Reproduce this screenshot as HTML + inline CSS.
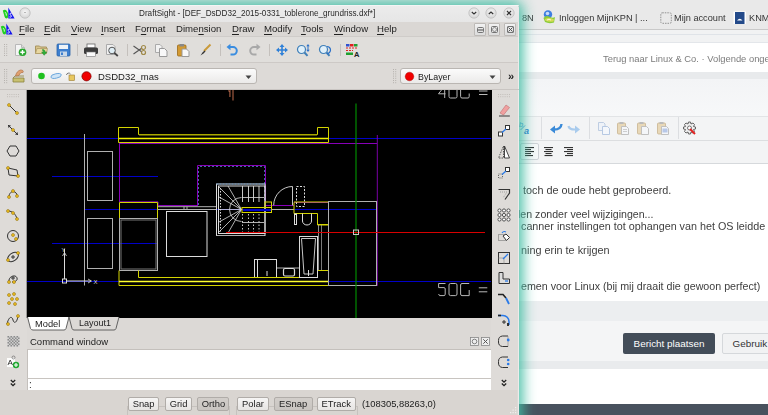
<!DOCTYPE html>
<html><head><meta charset="utf-8">
<style>
*{margin:0;padding:0;box-sizing:border-box}
html,body{width:768px;height:415px;overflow:hidden;background:#fff;font-family:"Liberation Sans",sans-serif;position:relative}
.a{position:absolute}
.t{position:absolute;white-space:nowrap;will-change:transform}
</style></head><body>

<!-- ===== Browser background ===== -->
<div class="a" style="left:0;top:0;width:768px;height:29px;background:#e9e9e9"></div>
<div class="a" style="left:0;top:29px;width:768px;height:1px;background:#c9c9c9"></div>
<div class="a" style="left:0;top:30px;width:768px;height:13px;background:#f1f2f3"></div>
<div class="a" style="left:0;top:34px;width:768px;height:1px;background:#dfe3e8"></div>
<div class="a" style="left:0;top:42px;width:768px;height:1px;background:#e3e6ea"></div>
<div class="a" style="left:0;top:43px;width:768px;height:29px;background:#fff"></div>
<div class="a" style="left:0;top:72px;width:768px;height:7px;background:#e8eaec"></div>
<div class="a" style="left:0;top:79px;width:768px;height:37px;background:linear-gradient(#f3f4f6,#f7f8f9)"></div>
<div class="a" style="left:0;top:116px;width:768px;height:48px;background:#f3f4f5;border-top:1px solid #e2e4e6;border-bottom:1px solid #d6d9dc"></div>
<div class="a" style="left:0;top:140px;width:768px;height:1px;background:#dcdee0"></div>
<div class="a" style="left:0;top:164px;width:768px;height:137px;background:#fff"></div>
<div class="a" style="left:0;top:301px;width:768px;height:20px;background:#eceef0"></div>
<div class="a" style="left:0;top:321px;width:768px;height:40px;background:#f4f5f6"></div>
<div class="a" style="left:0;top:361px;width:768px;height:8px;background:#e9ebed"></div>
<div class="a" style="left:0;top:369px;width:768px;height:35px;background:#fff"></div>
<div class="a" style="left:0;top:404px;width:768px;height:11px;background:#48525e"></div>

<!-- bookmarks text -->
<div class="t" style="left:521.5px;top:14px;font-size:9.2px;line-height:9.2px;color:#333">8N</div>
<div class="t" style="left:559px;top:14px;font-size:9.2px;line-height:9.2px;color:#333">Inloggen MijnKPN | ...</div>
<div class="t" style="left:674px;top:14px;font-size:9.2px;line-height:9.2px;color:#333">Mijn account</div>
<div class="t" style="left:749px;top:14px;font-size:9.2px;line-height:9.2px;color:#333">KNMI</div>
<div class="t" style="left:603px;top:53.9px;font-size:9.4px;line-height:9.4px;color:#7c7c7c">Terug naar Linux &amp; Co. · Volgende ongelezen</div>

<!-- content text -->
<div class="t" style="left:523px;top:184.6px;font-size:10.85px;line-height:10.85px;color:#404040">toch de oude hebt geprobeerd.</div>
<div class="t" style="left:518px;top:208.8px;font-size:10.6px;line-height:10.6px;color:#404040">len zonder veel wijzigingen...</div>
<div class="t" style="left:520.8px;top:220.5px;font-size:10.78px;line-height:10.78px;color:#404040">canner instellingen tot ophangen van het OS leidde</div>
<div class="t" style="left:520.8px;top:244.6px;font-size:10.85px;line-height:10.85px;color:#404040">ning erin te krijgen</div>
<div class="t" style="left:521.3px;top:280.8px;font-size:10.7px;line-height:10.7px;color:#404040">emen voor Linux (bij mij draait die gewoon perfect)</div>

<!-- buttons -->
<div class="a" style="left:623px;top:333px;width:92px;height:21px;background:#434d59;border-radius:2px;color:#fff;font-size:9.9px;line-height:21px;text-align:center">Bericht plaatsen</div>
<div class="a" style="left:721.5px;top:333px;width:60px;height:21px;background:#f1f2f3;border:1px solid #d5d8db;border-radius:2px;color:#333;font-size:9.9px;line-height:19px;padding-left:10px">Gebruik</div>


<svg class="a" style="left:542px;top:9px;" width="14" height="16" viewBox="0 0 14 16"><circle cx="6" cy="5.5" r="4.2" fill="#3f7fe0"/><circle cx="5.5" cy="4.5" r="1.8" fill="#c8dcf8"/><path d="M1.5 9 Q4 5.5 8 8 Q11 9.5 13 8 L12 13.5 Q7 15 3 13Z" fill="#8ccc3a"/><path d="M3 10 Q7 8 12 10.5 L11.5 12.5 Q7 13 3.5 11.8Z" fill="#e8e060" opacity="0.8"/><path d="M5 11 Q7 9.5 9 11" stroke="#fff" stroke-width="0.8" fill="none"/></svg>
<svg class="a" style="left:660px;top:12px;" width="13" height="12" viewBox="0 0 13 12"><rect x="0.8" y="0.8" width="10.5" height="10.5" rx="1.5" fill="none" stroke="#888" stroke-width="0.9" stroke-dasharray="1.5 1"/></svg>
<svg class="a" style="left:733px;top:11px;" width="14" height="14" viewBox="0 0 14 14"><rect x="0.5" y="0.5" width="12.5" height="12.5" fill="#fff"/><rect x="2" y="1" width="9.5" height="12" fill="#234a8a"/><path d="M4 9.5 Q6.7 6 9.5 9.5Z" fill="#fff"/></svg>
<div class="a" style="left:540.5px;top:117px;width:1px;height:22px;background:#dcdee1"></div>
<div class="a" style="left:589.3px;top:117px;width:1px;height:22px;background:#dcdee1"></div>
<div class="a" style="left:677.6px;top:117px;width:1px;height:22px;background:#dcdee1"></div>
<svg class="a" style="left:518px;top:120px;" width="16" height="16" viewBox="0 0 16 16"><text x="1" y="7" font-family="Liberation Sans" font-size="7.5" font-style="italic" fill="#3a8ad8">b</text><text x="6" y="14" font-family="Liberation Sans" font-size="9" font-weight="bold" font-style="italic" fill="#2f7fd0">a</text><path d="M2.5 10 L7 5.5" stroke="#3a8ad8" stroke-width="0.9"/></svg>
<svg class="a" style="left:549px;top:122px;" width="14" height="12" viewBox="0 0 14 12"><path d="M12.5 2 Q12 7.5 5 7.5" stroke="#3a8ad8" stroke-width="2.4" fill="none"/><path d="M1 7.5 L6 3.5 V11.5Z" fill="#3a8ad8"/></svg>
<svg class="a" style="left:567px;top:122px;" width="14" height="12" viewBox="0 0 14 12"><path d="M1.5 4 Q2 7.5 8 7.5" stroke="#a9cbed" stroke-width="2.2" fill="none"/><path d="M13 7.5 L8 3.5 V11.5Z" fill="#a9cbed"/></svg>
<svg class="a" style="left:597px;top:121px;" width="15" height="15" viewBox="0 0 15 15"><path d="M1.5 1.5 H6.5 L8 3 V9.5 H1.5Z" fill="#eef2f8" stroke="#b8c8e0" stroke-width="0.9"/><path d="M5.5 5.5 H10.5 L12.5 7.5 V13.5 H5.5Z" fill="#f4f7fb" stroke="#b0c4e0" stroke-width="0.9"/></svg>
<svg class="a" style="left:616px;top:121px;" width="15" height="15" viewBox="0 0 15 15"><rect x="1.5" y="2" width="8" height="11" rx="1" fill="#e8d8b8" stroke="#c8b490" stroke-width="0.8"/><rect x="3.5" y="1" width="4" height="2" fill="#bbb"/><path d="M5.5 5.5 H10.5 L12.5 7.5 V13.5 H5.5Z" fill="#f4f6f9" stroke="#bbb" stroke-width="0.9"/><path d="M7 8.5 H11 M7 10.5 H11" stroke="#bbb" stroke-width="0.7"/></svg>
<svg class="a" style="left:636px;top:121px;" width="15" height="15" viewBox="0 0 15 15"><rect x="1.5" y="2" width="8" height="11" rx="1" fill="#e8d8b8" stroke="#c8b490" stroke-width="0.8"/><rect x="3.5" y="1" width="4" height="2" fill="#bbb"/><path d="M5.5 5.5 H10.5 L12.5 7.5 V13.5 H5.5Z" fill="#f4f6f9" stroke="#bbb" stroke-width="0.9"/></svg>
<svg class="a" style="left:656px;top:121px;" width="15" height="15" viewBox="0 0 15 15"><rect x="1.5" y="2" width="8" height="11" rx="1" fill="#e8d8b8" stroke="#c8b490" stroke-width="0.8"/><rect x="3.5" y="1" width="4" height="2" fill="#bbb"/><path d="M5.5 5.5 H10.5 L12.5 7.5 V13.5 H5.5Z" fill="#f4f6f9" stroke="#bbb" stroke-width="0.9"/><rect x="6.5" y="7.5" width="5" height="4" fill="#b8c8e8"/></svg>
<svg class="a" style="left:682px;top:121px;" width="15" height="15" viewBox="0 0 15 15"><path d="M6.5 1 L8.5 1 L9 3 L11 2 L12.5 3.5 L11.5 5.5 L13.5 6 V8 L11.5 8.5 L12.5 10.5 L11 12 L9 11 L8.5 13 H6.5 L6 11 L4 12 L2.5 10.5 L3.5 8.5 L1.5 8 V6 L3.5 5.5 L2.5 3.5 L4 2 L6 3Z" fill="#eee" stroke="#555" stroke-width="0.9"/><circle cx="7.5" cy="7" r="2" fill="#fff" stroke="#555" stroke-width="0.8"/><path d="M8 8 L13 13" stroke="#e02020" stroke-width="2"/></svg>
<div class="a" style="left:520px;top:143.4px;width:18.5px;height:16.6px;background:#f7f8f9;border:1px solid #cfd2d6;border-radius:2px"></div>
<svg class="a" style="left:524.5px;top:147px;" width="10" height="10" viewBox="0 0 10 10"><rect x="0" y="0" width="9" height="1.1" fill="#333"/><rect x="0" y="2" width="6" height="1.1" fill="#333"/><rect x="0" y="4" width="9" height="1.1" fill="#333"/><rect x="0" y="6" width="6" height="1.1" fill="#333"/><rect x="0" y="8" width="8" height="1.1" fill="#333"/></svg>
<svg class="a" style="left:544px;top:147px;" width="10" height="10" viewBox="0 0 10 10"><rect x="0.0" y="0" width="9" height="1.1" fill="#333"/><rect x="1.5" y="2" width="6" height="1.1" fill="#333"/><rect x="0.0" y="4" width="9" height="1.1" fill="#333"/><rect x="1.5" y="6" width="6" height="1.1" fill="#333"/><rect x="0.5" y="8" width="8" height="1.1" fill="#333"/></svg>
<svg class="a" style="left:564px;top:147px;" width="10" height="10" viewBox="0 0 10 10"><rect x="0" y="0" width="9" height="1.1" fill="#333"/><rect x="3" y="2" width="6" height="1.1" fill="#333"/><rect x="0" y="4" width="9" height="1.1" fill="#333"/><rect x="3" y="6" width="6" height="1.1" fill="#333"/><rect x="1" y="8" width="8" height="1.1" fill="#333"/></svg>
<div class="a" style="left:-30px;top:5px;width:549px;height:440px;border-top-right-radius:4px;background:#dcd9d6;box-shadow:0 0 13px 4px rgba(66,190,164,0.95)"></div>
<div class="a" style="left:0px;top:5px;width:519px;height:17px;background:linear-gradient(#ececec,#e6e6e6);border-top-right-radius:4px"></div>
<div class="a" style="left:0px;top:5px;width:519px;height:1px;background:#f4f4f4;border-top-right-radius:4px"></div>
<svg class="a" style="left:0px;top:7px;" width="16" height="13" viewBox="0 0 16 13"><path d="M2.8 3.6 Q5 2.2 6.5 3.4 Q8.5 5.5 8.3 9 Q8 11.5 6.5 11.5 Q5 11.5 4.5 9.5 Z" fill="#22d022"/><path d="M5.2 5.2 Q6.5 6.5 6.4 8.6" stroke="#e8ffe8" stroke-width="0.9" fill="none"/><path d="M8.3 0.6 L14.6 11.6 H8.3 Z" fill="#1414ee"/><path d="M11.5 6.3 Q10 5.8 9.8 7 Q9.8 7.8 10.8 8.2 Q11.8 8.7 11.2 9.8 Q10.5 10.4 9.4 9.9" stroke="#fff" stroke-width="0.9" fill="none"/></svg>
<svg class="a" style="left:19px;top:7px;" width="12" height="12" viewBox="0 0 12 12"><defs><radialGradient id="rg" cx="50%" cy="40%" r="60%"><stop offset="0" stop-color="#f6f6f6"/><stop offset="1" stop-color="#d4d4d4"/></radialGradient></defs><circle cx="6" cy="6" r="5.2" fill="url(#rg)" stroke="#bdbdbd" stroke-width="0.8"/><circle cx="6" cy="5.5" r="0.5" fill="#555"/></svg>
<div class="t" style="left:139.3px;top:9.5px;font-size:8.17px;line-height:8.17px;color:#2a2a2a;">DraftSight - [DEF_DsDD32_2015-0331_toblerone_grundriss.dxf*]</div>
<svg class="a" style="left:468px;top:7px;" width="12" height="12" viewBox="0 0 12 12"><circle cx="6" cy="6" r="5.2" fill="url(#rg)" stroke="#c0c0c0" stroke-width="0.8"/><path d="M3.8 5 L6 7 L8.2 5" stroke="#333" stroke-width="1.2" fill="none"/></svg>
<svg class="a" style="left:485px;top:7px;" width="12" height="12" viewBox="0 0 12 12"><circle cx="6" cy="6" r="5.2" fill="url(#rg)" stroke="#c0c0c0" stroke-width="0.8"/><path d="M3.8 7 L6 5 L8.2 7" stroke="#333" stroke-width="1.2" fill="none"/></svg>
<svg class="a" style="left:502.6px;top:7px;" width="12" height="12" viewBox="0 0 12 12"><circle cx="6" cy="6" r="5.2" fill="url(#rg)" stroke="#c0c0c0" stroke-width="0.8"/><path d="M4 4 L8 8 M8 4 L4 8" stroke="#333" stroke-width="1.2" fill="none"/></svg>
<div class="a" style="left:0px;top:22px;width:519px;height:14px;background:#dad7d4"></div>
<div class="a" style="left:0px;top:36px;width:519px;height:1px;background:#cfccc9"></div>
<svg class="a" style="left:-2.5px;top:22.5px;" width="16" height="13" viewBox="0 0 16 13"><path d="M2.8 3.6 Q5 2.2 6.5 3.4 Q8.5 5.5 8.3 9 Q8 11.5 6.5 11.5 Q5 11.5 4.5 9.5 Z" fill="#22d022"/><path d="M5.2 5.2 Q6.5 6.5 6.4 8.6" stroke="#e8ffe8" stroke-width="0.9" fill="none"/><path d="M8.3 0.6 L14.6 11.6 H8.3 Z" fill="#1414ee"/><path d="M11.5 6.3 Q10 5.8 9.8 7 Q9.8 7.8 10.8 8.2 Q11.8 8.7 11.2 9.8 Q10.5 10.4 9.4 9.9" stroke="#fff" stroke-width="0.9" fill="none"/></svg>
<div class="t" style="left:19px;top:24.4px;font-size:9.6px;line-height:9.6px;color:#222;"><span style="text-decoration:underline;text-underline-offset:1.5px">F</span>ile</div>
<div class="t" style="left:44.3px;top:24.4px;font-size:9.6px;line-height:9.6px;color:#222;"><span style="text-decoration:underline;text-underline-offset:1.5px">E</span>dit</div>
<div class="t" style="left:70.8px;top:24.4px;font-size:9.6px;line-height:9.6px;color:#222;"><span style="text-decoration:underline;text-underline-offset:1.5px">V</span>iew</div>
<div class="t" style="left:101px;top:24.4px;font-size:9.6px;line-height:9.6px;color:#222;"><span style="text-decoration:underline;text-underline-offset:1.5px">I</span>nsert</div>
<div class="t" style="left:135.4px;top:24.4px;font-size:9.6px;line-height:9.6px;color:#222;">F<span style="text-decoration:underline;text-underline-offset:1.5px">o</span>rmat</div>
<div class="t" style="left:175.9px;top:24.4px;font-size:9.6px;line-height:9.6px;color:#222;">Dime<span style="text-decoration:underline;text-underline-offset:1.5px">n</span>sion</div>
<div class="t" style="left:231.8px;top:24.4px;font-size:9.6px;line-height:9.6px;color:#222;"><span style="text-decoration:underline;text-underline-offset:1.5px">D</span>raw</div>
<div class="t" style="left:264.4px;top:24.4px;font-size:9.6px;line-height:9.6px;color:#222;"><span style="text-decoration:underline;text-underline-offset:1.5px">M</span>odify</div>
<div class="t" style="left:300.9px;top:24.4px;font-size:9.6px;line-height:9.6px;color:#222;"><span style="text-decoration:underline;text-underline-offset:1.5px">T</span>ools</div>
<div class="t" style="left:333.7px;top:24.4px;font-size:9.6px;line-height:9.6px;color:#222;"><span style="text-decoration:underline;text-underline-offset:1.5px">W</span>indow</div>
<div class="t" style="left:377.4px;top:24.4px;font-size:9.6px;line-height:9.6px;color:#222;"><span style="text-decoration:underline;text-underline-offset:1.5px">H</span>elp</div>
<div class="a" style="left:474px;top:23.4px;width:12.3px;height:12.3px;background:linear-gradient(#f2f2f2,#dcdcdc);border:1px solid #bdbab7;border-radius:1px"></div>
<div class="a" style="left:488px;top:23.4px;width:12.3px;height:12.3px;background:linear-gradient(#f2f2f2,#dcdcdc);border:1px solid #bdbab7;border-radius:1px"></div>
<div class="a" style="left:503.9px;top:23.4px;width:12.3px;height:12.3px;background:linear-gradient(#f2f2f2,#dcdcdc);border:1px solid #bdbab7;border-radius:1px"></div>
<svg class="a" style="left:474px;top:23px;" width="13" height="13" viewBox="0 0 13 13"><rect x="3.5" y="4.5" width="6" height="5" rx="1" fill="none" stroke="#666" stroke-width="0.9"/><path d="M4 7 H9" stroke="#666" stroke-width="1.2"/></svg>
<svg class="a" style="left:488px;top:23px;" width="13" height="13" viewBox="0 0 13 13"><rect x="3.5" y="3.5" width="6" height="6" rx="1" fill="none" stroke="#666" stroke-width="0.9"/><circle cx="6.5" cy="6.5" r="2" fill="none" stroke="#777" stroke-width="0.7"/></svg>
<svg class="a" style="left:503.9px;top:23px;" width="13" height="13" viewBox="0 0 13 13"><rect x="3.5" y="3.5" width="6" height="6" rx="0.5" fill="none" stroke="#666" stroke-width="0.9"/><path d="M4.5 4.5 L8.5 8.5 M8.5 4.5 L4.5 8.5" stroke="#555" stroke-width="1"/></svg>
<div class="a" style="left:0px;top:37px;width:519px;height:25px;background:#e0dedb"></div>
<div class="a" style="left:0px;top:62px;width:519px;height:1px;background:#cdc9c6"></div>
<div class="a" style="left:0px;top:63px;width:519px;height:27px;background:#dddad7"></div>
<svg class="a" style="left:3.5px;top:44px;" width="5.4" height="14.200000000000001" viewBox="0 0 5.4 14.200000000000001"><rect x="0.0" y="0.0" width="1" height="1" fill="#b5b1ad"/><rect x="0.0" y="2.2" width="1" height="1" fill="#b5b1ad"/><rect x="0.0" y="4.4" width="1" height="1" fill="#b5b1ad"/><rect x="0.0" y="6.6000000000000005" width="1" height="1" fill="#b5b1ad"/><rect x="0.0" y="8.8" width="1" height="1" fill="#b5b1ad"/><rect x="0.0" y="11.0" width="1" height="1" fill="#b5b1ad"/><rect x="2.2" y="0.0" width="1" height="1" fill="#b5b1ad"/><rect x="2.2" y="2.2" width="1" height="1" fill="#b5b1ad"/><rect x="2.2" y="4.4" width="1" height="1" fill="#b5b1ad"/><rect x="2.2" y="6.6000000000000005" width="1" height="1" fill="#b5b1ad"/><rect x="2.2" y="8.8" width="1" height="1" fill="#b5b1ad"/><rect x="2.2" y="11.0" width="1" height="1" fill="#b5b1ad"/></svg>
<svg class="a" style="left:3.5px;top:69px;" width="5.4" height="16.400000000000002" viewBox="0 0 5.4 16.400000000000002"><rect x="0.0" y="0.0" width="1" height="1" fill="#b5b1ad"/><rect x="0.0" y="2.2" width="1" height="1" fill="#b5b1ad"/><rect x="0.0" y="4.4" width="1" height="1" fill="#b5b1ad"/><rect x="0.0" y="6.6000000000000005" width="1" height="1" fill="#b5b1ad"/><rect x="0.0" y="8.8" width="1" height="1" fill="#b5b1ad"/><rect x="0.0" y="11.0" width="1" height="1" fill="#b5b1ad"/><rect x="0.0" y="13.200000000000001" width="1" height="1" fill="#b5b1ad"/><rect x="2.2" y="0.0" width="1" height="1" fill="#b5b1ad"/><rect x="2.2" y="2.2" width="1" height="1" fill="#b5b1ad"/><rect x="2.2" y="4.4" width="1" height="1" fill="#b5b1ad"/><rect x="2.2" y="6.6000000000000005" width="1" height="1" fill="#b5b1ad"/><rect x="2.2" y="8.8" width="1" height="1" fill="#b5b1ad"/><rect x="2.2" y="11.0" width="1" height="1" fill="#b5b1ad"/><rect x="2.2" y="13.200000000000001" width="1" height="1" fill="#b5b1ad"/></svg>
<svg class="a" style="left:13px;top:43px;" width="15" height="15" viewBox="0 0 15 15"><path d="M2.5 1.5 H8.5 L11.5 4.5 V12.5 H2.5 Z" fill="#f4f4f4" stroke="#b8b8b8" stroke-width="1"/><path d="M8.5 1.5 V4.5 H11.5" fill="#ddd" stroke="#b8b8b8"/><circle cx="9.5" cy="9.2" r="3.8" fill="#29a82f"/><path d="M9.5 7 V11.4 M7.3 9.2 H11.7" stroke="#fff" stroke-width="1.4"/></svg>
<svg class="a" style="left:34px;top:43px;" width="15" height="15" viewBox="0 0 15 15"><path d="M1.5 3 H5.5 L6.5 4 H12.5 V10.5 H1.5 Z" fill="#d9c48a" stroke="#a89460"/><path d="M1.5 10.5 L3 5.5 H13.5 L12.5 10.5 Z" fill="#e8d7a0" stroke="#b09c68" stroke-width="0.8"/><path d="M8.5 6.5 C10.5 6.5 11 7.5 11 9 H12.8 L10.2 12.3 L7.6 9 H9.3 C9.3 8 9 7.5 8.5 7.5Z" fill="#2fae3a" stroke="#1f8a2a" stroke-width="0.5"/></svg>
<svg class="a" style="left:56px;top:43px;" width="15" height="15" viewBox="0 0 15 15"><rect x="1" y="1" width="13" height="12" rx="1" fill="#3d7fcf" stroke="#2a62a8" stroke-width="0.8"/><rect x="3" y="1.8" width="9" height="4.2" fill="#eef3f8"/><rect x="4" y="8.5" width="7" height="4.5" fill="#c9d8e8"/><rect x="5" y="9.5" width="2" height="2.5" fill="#3d7fcf"/></svg>
<div class="a" style="left:77.4px;top:44px;width:1px;height:12px;background:#c4c0bc"></div>
<svg class="a" style="left:83px;top:43px;" width="16" height="15" viewBox="0 0 16 15"><rect x="4" y="1" width="8" height="4" fill="#fff" stroke="#666" stroke-width="0.8"/><rect x="1" y="4.5" width="14" height="6.5" rx="1.5" fill="#3c3c3c"/><rect x="3.5" y="9" width="9" height="4.5" fill="#fafafa" stroke="#777" stroke-width="0.6"/></svg>
<svg class="a" style="left:105px;top:43px;" width="15" height="15" viewBox="0 0 15 15"><path d="M1.5 1.5 H8 L10 3.5 V11.5 H1.5 Z" fill="#f0f0f0" stroke="#aaa"/><circle cx="7" cy="7.5" r="3.3" fill="#dfeef5" stroke="#555" stroke-width="1"/><path d="M9.3 9.8 L12.8 13" stroke="#444" stroke-width="1.8"/></svg>
<div class="a" style="left:127px;top:44px;width:1px;height:12px;background:#c4c0bc"></div>
<svg class="a" style="left:132px;top:43px;" width="15" height="15" viewBox="0 0 15 15"><path d="M1.5 3 L10 9 M1.5 11 L10 5" stroke="#555" stroke-width="1.1"/><circle cx="11.5" cy="4.5" r="2" fill="none" stroke="#a08a4a" stroke-width="1.2"/><circle cx="11.5" cy="9.5" r="2" fill="none" stroke="#a08a4a" stroke-width="1.2"/></svg>
<svg class="a" style="left:154px;top:43px;" width="15" height="15" viewBox="0 0 15 15"><path d="M1.5 1.5 H6 L8 3.5 V9.5 H1.5 Z" fill="#f2f2f2" stroke="#aaa"/><path d="M5.5 5.5 H10.5 L13 8 V13.5 H5.5 Z" fill="#f8f8f8" stroke="#999"/></svg>
<svg class="a" style="left:176px;top:43px;" width="15" height="15" viewBox="0 0 15 15"><rect x="1.5" y="2" width="8.5" height="11" rx="1" fill="#d39a32" stroke="#9a6a18" stroke-width="0.8"/><rect x="3.5" y="1" width="4.5" height="2.5" fill="#888"/><path d="M6 6 H10.5 L13 8.5 V13.5 H6 Z" fill="#f8f8f8" stroke="#999"/></svg>
<svg class="a" style="left:199px;top:43px;" width="13" height="14" viewBox="0 0 13 14"><path d="M11.5 1.5 L5 8" stroke="#c99a3a" stroke-width="2"/><path d="M5.5 7.5 L3.5 9.5 L1.5 12.5 L4.5 10.5 L6.5 8.5Z" fill="#333"/></svg>
<div class="a" style="left:219.9px;top:44px;width:1px;height:12px;background:#c4c0bc"></div>
<svg class="a" style="left:226px;top:43px;" width="13" height="14" viewBox="0 0 13 14"><path d="M2.5 4 H7 A3.8 3.8 0 0 1 7 11.6 H4.5" stroke="#3a8de0" stroke-width="2" fill="none"/><path d="M0.5 4 L4.5 0.8 V7.2Z" fill="#3a8de0"/></svg>
<svg class="a" style="left:248px;top:43px;" width="13" height="14" viewBox="0 0 13 14"><path d="M10.5 4 H6 A3.8 3.8 0 0 0 6 11.6 H8.5" stroke="#a8a8a8" stroke-width="2" fill="none"/><path d="M12.5 4 L8.5 0.8 V7.2Z" fill="#a8a8a8"/></svg>
<div class="a" style="left:269.3px;top:44px;width:1px;height:12px;background:#c4c0bc"></div>
<svg class="a" style="left:275px;top:43px;" width="14" height="14" viewBox="0 0 14 14"><path d="M7 1 L9.5 4 H4.5Z M7 13 L9.5 10 H4.5Z M1 7 L4 4.5 V9.5Z M13 7 L10 4.5 V9.5Z" fill="#2f80d8"/><path d="M7 3 V11 M3 7 H11" stroke="#2f80d8" stroke-width="1.6"/></svg>
<svg class="a" style="left:296px;top:43px;" width="15" height="15" viewBox="0 0 15 15"><circle cx="5.5" cy="6.5" r="4" fill="#e0f0fa" stroke="#3f7fb8" stroke-width="1.2"/><path d="M8.5 9.5 L11.5 12.8" stroke="#3f7fb8" stroke-width="2"/><path d="M12 1 L10.3 3.3 H13.7Z M12 9 L10.3 6.7 H13.7Z" fill="#2a70c8"/><path d="M12 3 V7" stroke="#2a70c8"/></svg>
<svg class="a" style="left:318px;top:43px;" width="15" height="15" viewBox="0 0 15 15"><circle cx="5.5" cy="6.5" r="4" fill="#e0f0fa" stroke="#3f7fb8" stroke-width="1.2"/><path d="M8.5 9.5 L11.5 12.8" stroke="#3f7fb8" stroke-width="2"/><path d="M9 3.5 A3.5 3.5 0 0 1 12.5 7 A3.5 3.5 0 0 1 9 10.5" stroke="#2a70c8" fill="none" stroke-width="1.2"/></svg>
<div class="a" style="left:340px;top:44px;width:1px;height:12px;background:#c4c0bc"></div>
<svg class="a" style="left:345px;top:43px;" width="16" height="15" viewBox="0 0 16 15"><rect x="1" y="1" width="3.5" height="2.5" fill="#3050d0"/><rect x="5" y="1" width="3.5" height="2.5" fill="#e02020"/><rect x="9" y="1" width="3.5" height="2.5" fill="#20a030"/><path d="M1 5 H12 M1 7.5 H8" stroke="#e02020" stroke-width="1" stroke-dasharray="2 1"/><rect x="1" y="9.5" width="7" height="2.5" fill="#20a030"/><text x="9" y="14" font-family="Liberation Sans" font-weight="bold" font-size="7.5" fill="#222">A</text></svg>
<svg class="a" style="left:11px;top:67px;" width="15" height="17" viewBox="0 0 15 17"><path d="M2 11 L13 11 L13 15 L2 15Z" fill="#c8c070" stroke="#8a8440" stroke-width="0.8"/><path d="M2 11 L4 9 H13" fill="none" stroke="#8a8440" stroke-width="0.8"/><path d="M4.5 9 C5 6 7 3.5 9.5 3 C11.5 2.8 13 4 12 5.5 C10.5 5 9 6 8 8.5Z" fill="#e0a070" stroke="#a86a40" stroke-width="0.6"/></svg>
<div class="a" style="left:31px;top:68.3px;width:226px;height:16px;background:linear-gradient(#fbfbfb,#ebeae9);border:1px solid #bab6b2;border-radius:3px"></div>
<svg class="a" style="left:36px;top:69.2px;" width="60" height="14" viewBox="0 0 60 14"><circle cx="5.5" cy="7" r="3.3" fill="#1ec01e"/><ellipse cx="20.2" cy="7" rx="5.3" ry="2.2" fill="#cfe4f6" stroke="#6aa6dc" stroke-width="0.9" transform="rotate(-12 20 7.5)"/><path d="M30.5 6 A2.2 2.2 0 0 1 34.5 5" stroke="#777" fill="none" stroke-width="1"/><rect x="33" y="6" width="5.5" height="5.5" fill="#e8c860" stroke="#9a7a30" stroke-width="0.6"/><circle cx="50.5" cy="7.3" r="4.6" fill="#f00000" stroke="#7a0000" stroke-width="0.7"/></svg>
<div class="t" style="left:98.2px;top:72.3px;font-size:9.5px;line-height:9.5px;color:#1a1a1a;">DSDD32_mas</div>
<svg class="a" style="left:245px;top:75px;" width="8" height="5" viewBox="0 0 8 5"><path d="M0.5 0.5 H6.5 L3.5 4Z" fill="#444"/></svg>
<svg class="a" style="left:393px;top:69px;" width="6" height="17" viewBox="0 0 6 17"><rect x="0.0" y="0.0" width="1" height="1" fill="#b5b1ad"/><rect x="0.0" y="2.2" width="1" height="1" fill="#b5b1ad"/><rect x="0.0" y="4.4" width="1" height="1" fill="#b5b1ad"/><rect x="0.0" y="6.6000000000000005" width="1" height="1" fill="#b5b1ad"/><rect x="0.0" y="8.8" width="1" height="1" fill="#b5b1ad"/><rect x="0.0" y="11.0" width="1" height="1" fill="#b5b1ad"/><rect x="0.0" y="13.200000000000001" width="1" height="1" fill="#b5b1ad"/><rect x="2.2" y="0.0" width="1" height="1" fill="#b5b1ad"/><rect x="2.2" y="2.2" width="1" height="1" fill="#b5b1ad"/><rect x="2.2" y="4.4" width="1" height="1" fill="#b5b1ad"/><rect x="2.2" y="6.6000000000000005" width="1" height="1" fill="#b5b1ad"/><rect x="2.2" y="8.8" width="1" height="1" fill="#b5b1ad"/><rect x="2.2" y="11.0" width="1" height="1" fill="#b5b1ad"/><rect x="2.2" y="13.200000000000001" width="1" height="1" fill="#b5b1ad"/></svg>
<div class="a" style="left:399.5px;top:68.3px;width:101.7px;height:16px;background:linear-gradient(#fbfbfb,#ebeae9);border:1px solid #bab6b2;border-radius:3px"></div>
<svg class="a" style="left:404px;top:71px;" width="12" height="12" viewBox="0 0 12 12"><circle cx="5.5" cy="5.5" r="4.3" fill="#f00000" stroke="#900" stroke-width="0.4"/></svg>
<div class="t" style="left:418.3px;top:72.5px;font-size:8.85px;line-height:8.85px;color:#1a1a1a;">ByLayer</div>
<svg class="a" style="left:489px;top:75px;" width="8" height="5" viewBox="0 0 8 5"><path d="M0.5 0.5 H6.5 L3.5 4Z" fill="#444"/></svg>
<div class="t" style="left:508px;top:71.2px;font-size:11px;line-height:11px;color:#222;font-weight:bold">»</div>
<div class="a" style="left:0px;top:90px;width:27px;height:300px;background:#dedbd8"></div>
<div class="a" style="left:491px;top:90px;width:28px;height:300px;background:#dedbd8"></div>
<div class="a" style="left:518px;top:22px;width:1px;height:393px;background:#ecebea"></div>
<div class="a" style="left:0px;top:88.5px;width:519px;height:1.5px;background:#c9c5c2"></div>
<div class="a" style="left:26px;top:90px;width:466px;height:228px;background:#000;border-left:1px solid #9a9896"></div>
<div class="a" style="left:27px;top:318px;width:464px;height:13px;background:#dcd9d6"></div>
<svg class="a" style="left:253px;top:331.5px" width="15" height="2"><rect x="0.0" y="0" width="1" height="1" fill="#f4f2f0"/><rect x="2.2" y="0" width="1" height="1" fill="#f4f2f0"/><rect x="4.4" y="0" width="1" height="1" fill="#f4f2f0"/><rect x="6.6000000000000005" y="0" width="1" height="1" fill="#f4f2f0"/><rect x="8.8" y="0" width="1" height="1" fill="#f4f2f0"/><rect x="11.0" y="0" width="1" height="1" fill="#f4f2f0"/><rect x="13.200000000000001" y="0" width="1" height="1" fill="#f4f2f0"/></svg>
<div class="a" style="left:27px;top:331px;width:464px;height:19px;background:#dcd9d6"></div>
<div class="t" style="left:29.6px;top:337.2px;font-size:9.5px;line-height:9.5px;color:#222;">Command window</div>
<svg class="a" style="left:470px;top:337px;" width="10" height="10" viewBox="0 0 10 10"><rect x="0.5" y="0.5" width="8" height="8" fill="#eee" stroke="#888" stroke-width="0.8"/><circle cx="4.5" cy="4.5" r="2.3" fill="none" stroke="#666" stroke-width="0.8"/></svg>
<svg class="a" style="left:481px;top:337px;" width="10" height="10" viewBox="0 0 10 10"><rect x="0.5" y="0.5" width="8" height="8" fill="#eee" stroke="#888" stroke-width="0.8"/><path d="M2.3 2.3 L6.7 6.7 M6.7 2.3 L2.3 6.7" stroke="#555" stroke-width="1"/></svg>
<div class="a" style="left:26.5px;top:349px;width:464px;height:41px;background:#fff;border-top:1px solid #c4c0bc;border-left:1px solid #c4c0bc"></div>
<div class="a" style="left:27px;top:378px;width:464px;height:1px;background:#c8c4c0"></div>
<div class="t" style="left:29.3px;top:379.8px;font-size:10px;line-height:10px;color:#333;">:</div>
<div class="a" style="left:0px;top:390px;width:517px;height:25px;background:#d9d5d1"></div>
<svg class="a" style="left:27px;top:90px" width="464" height="228" viewBox="27 90 464 228"><line x1="229.9" y1="90" x2="229.9" y2="97" stroke="#a05a40" stroke-width="1.2" /><line x1="233" y1="90" x2="233" y2="100.5" stroke="#a05a40" stroke-width="1.2" /><line x1="228.5" y1="90.5" x2="229.5" y2="92" stroke="#c07050" stroke-width="1" /><line x1="27" y1="138.5" x2="491" y2="138.5" stroke="#0000c8" stroke-width="1" /><line x1="52" y1="176.5" x2="158" y2="176.5" stroke="#0000c8" stroke-width="1" /><line x1="84" y1="209.5" x2="376.5" y2="209.5" stroke="#0000c8" stroke-width="1" /><line x1="52" y1="243.5" x2="158" y2="243.5" stroke="#0000c8" stroke-width="1" /><line x1="27" y1="281.5" x2="491" y2="281.5" stroke="#0000c8" stroke-width="1" /><line x1="84.5" y1="134" x2="84.5" y2="285.5" stroke="#b0b0b0" stroke-width="1" /><rect x="87.5" y="151.5" width="25" height="49" fill="none" stroke="#b0b0b0" stroke-width="1" /><rect x="87.5" y="218.5" width="25" height="50" fill="none" stroke="#b0b0b0" stroke-width="1" /><rect x="119.5" y="218.5" width="38" height="52" fill="none" stroke="#b0b0b0" stroke-width="1" /><rect x="121" y="220" width="35" height="49" fill="none" stroke="#777" stroke-width="1" /><rect x="166.5" y="211.5" width="40.5" height="45" fill="none" stroke="#dcdcdc" stroke-width="1" /><line x1="158" y1="206.7" x2="216" y2="206.7" stroke="#b0b0b0" stroke-width="1" /><line x1="158" y1="209.5" x2="216" y2="209.5" stroke="#b0b0b0" stroke-width="1" /><line x1="184" y1="206.5" x2="184" y2="209.5" stroke="#b0b0b0" stroke-width="1" /><line x1="187" y1="206.5" x2="187" y2="209.5" stroke="#b0b0b0" stroke-width="1" /><line x1="272" y1="209.5" x2="294" y2="209.5" stroke="#b0b0b0" stroke-width="1" /><line x1="119" y1="143.5" x2="377" y2="143.5" stroke="#8800b8" stroke-width="1" /><line x1="377.3" y1="135" x2="377.3" y2="285.8" stroke="#8800b8" stroke-width="0.9" /><line x1="119.5" y1="143" x2="119.5" y2="202" stroke="#8800b8" stroke-width="1" /><path d="M119 201.8 H158 V205.5 H198" fill="none" stroke="#8800b8" stroke-width="1" /><line x1="265" y1="205.5" x2="294" y2="205.5" stroke="#8800b8" stroke-width="1" /><line x1="294" y1="202.5" x2="328" y2="202.5" stroke="#8800b8" stroke-width="1" /><path d="M197.5 206 V165.5 H265.5 V202" fill="none" stroke="#8800b8" stroke-width="1" /><path d="M198.5 205 V166.5 H264.5 V200" fill="none" stroke="#4a78b8" stroke-width="0.9" stroke-dasharray="2 2"/><path d="M118.5 142.5 V127.5 H138.5 V134.5 H317.5 V127.5 H328.5 V142.5 Z" fill="none" stroke="#d4d400" stroke-width="1" /><line x1="119" y1="138.5" x2="328.5" y2="138.5" stroke="#f0f000" stroke-width="1.3" /><line x1="139" y1="134.8" x2="317" y2="134.8" stroke="#a8a800" stroke-width="1.6" /><path d="M119.5 218 V202.5 H157.5 V218" fill="none" stroke="#d4d400" stroke-width="1" /><rect x="216.5" y="184" width="48.5" height="51.5" fill="none" stroke="#dcdcdc" stroke-width="1" /><rect x="218.5" y="186" width="46.5" height="47.5" fill="none" stroke="#dcdcdc" stroke-width="1" /><line x1="220.5" y1="188" x2="220.5" y2="232" stroke="#dcdcdc" stroke-width="1" stroke-dasharray="1.5 1.5"/><path d="M216.5 184 H265" fill="none" stroke="#6090c0" stroke-width="1" stroke-dasharray="2 1"/><line x1="241.5" y1="209.5" x2="219" y2="187" stroke="#dcdcdc" stroke-width="0.8" /><line x1="241.5" y1="209.5" x2="228" y2="186" stroke="#dcdcdc" stroke-width="0.8" /><line x1="241.5" y1="209.5" x2="219" y2="197" stroke="#dcdcdc" stroke-width="0.8" /><line x1="241.5" y1="209.5" x2="219" y2="209.5" stroke="#dcdcdc" stroke-width="0.8" /><line x1="241.5" y1="209.5" x2="219" y2="222" stroke="#dcdcdc" stroke-width="0.8" /><line x1="241.5" y1="209.5" x2="219" y2="232" stroke="#dcdcdc" stroke-width="0.8" /><line x1="241.5" y1="209.5" x2="228" y2="233" stroke="#dcdcdc" stroke-width="0.8" /><path d="M241.5 197.5 A12 12 0 0 0 241.5 221.5" fill="none" stroke="#dcdcdc" stroke-width="0.8" /><line x1="242.5" y1="186" x2="242.5" y2="202" stroke="#dcdcdc" stroke-width="0.9" /><line x1="242.5" y1="214" x2="242.5" y2="233" stroke="#dcdcdc" stroke-width="0.9" stroke-dasharray="1.5 2"/><line x1="248.5" y1="186" x2="248.5" y2="202" stroke="#dcdcdc" stroke-width="0.9" /><line x1="248.5" y1="214" x2="248.5" y2="233" stroke="#dcdcdc" stroke-width="0.9" stroke-dasharray="1.5 2"/><line x1="253.5" y1="186" x2="253.5" y2="202" stroke="#dcdcdc" stroke-width="0.9" /><line x1="253.5" y1="214" x2="253.5" y2="233" stroke="#dcdcdc" stroke-width="0.9" stroke-dasharray="1.5 2"/><line x1="259" y1="186" x2="259" y2="202" stroke="#dcdcdc" stroke-width="0.9" /><line x1="259" y1="214" x2="259" y2="233" stroke="#dcdcdc" stroke-width="0.9" stroke-dasharray="1.5 2"/><line x1="242" y1="222.5" x2="264" y2="222.5" stroke="#dcdcdc" stroke-width="0.8" /><line x1="242" y1="197.5" x2="264" y2="197.5" stroke="#dcdcdc" stroke-width="0.8" /><rect x="243" y="209" width="28" height="2" fill="#0000c8"/><rect x="242" y="207.5" width="29.5" height="5" fill="none" stroke="#d4d400" stroke-width="1" /><rect x="265" y="202" width="6.5" height="5.5" fill="none" stroke="#d4d400" stroke-width="1" /><line x1="265.5" y1="90" x2="265.5" y2="90" stroke="#8800b8" stroke-width="1" /><path d="M273.7 205.3 A18.8 18.8 0 0 1 292.5 186.5 V205.3" fill="none" stroke="#dcdcdc" stroke-width="0.9" /><rect x="296.5" y="186.5" width="8" height="20" fill="none" stroke="#dcdcdc" stroke-width="1" stroke-dasharray="2 1.5"/><path d="M294 202.5 V213.5 H317.5 V225 H328.5" fill="none" stroke="#d4d400" stroke-width="1" /><line x1="294" y1="202" x2="328.5" y2="202" stroke="#d4d400" stroke-width="1" /><rect x="294.5" y="214" width="2" height="10.5" fill="none" stroke="#dcdcdc" stroke-width="1" /><path d="M302.5 213.5 V221 A4.5 4 0 0 0 311.5 221 V213.5" fill="none" stroke="#dcdcdc" stroke-width="1" /><line x1="318.5" y1="225" x2="318.5" y2="270" stroke="#b0b0b0" stroke-width="0.8" /><line x1="321.5" y1="225" x2="321.5" y2="270" stroke="#999" stroke-width="0.8" /><line x1="318" y1="270.5" x2="328.5" y2="270.5" stroke="#d4d400" stroke-width="1" /><line x1="318" y1="224.5" x2="328.5" y2="224.5" stroke="#d4d400" stroke-width="1" /><rect x="254.5" y="259.5" width="22" height="18" fill="none" stroke="#dcdcdc" stroke-width="1" /><line x1="257.5" y1="260" x2="257.5" y2="277" stroke="#dcdcdc" stroke-width="1" /><line x1="267" y1="271" x2="267" y2="276" stroke="#dcdcdc" stroke-width="1" /><line x1="277" y1="268" x2="299" y2="268" stroke="#b0b0b0" stroke-width="1" /><rect x="283.5" y="268.5" width="11" height="7.5" rx="1.5" fill="none" stroke="#dcdcdc" stroke-width="1.2"/><rect x="299.5" y="236.5" width="18" height="41" fill="none" stroke="#dcdcdc" stroke-width="1" /><path d="M301.5 238.5 H315.5 L313 274 H304 Z" fill="none" stroke="#dcdcdc" stroke-width="0.9" /><line x1="308.5" y1="270" x2="308.5" y2="276" stroke="#dcdcdc" stroke-width="1" /><line x1="216.5" y1="235.5" x2="264.5" y2="235.5" stroke="#b0b0b0" stroke-width="1" /><path d="M119 270.5 V285.5 M138.5 270.5 V277.5 H299" fill="none" stroke="#d4d400" stroke-width="1" /><line x1="119" y1="281.5" x2="328.5" y2="281.5" stroke="#ffff30" stroke-width="1.6" /><line x1="119" y1="285.5" x2="328.5" y2="285.5" stroke="#d4d400" stroke-width="1" /><rect x="328.5" y="201.5" width="48" height="84" fill="none" stroke="#b0b0b0" stroke-width="1" /><line x1="356" y1="103.5" x2="356" y2="318" stroke="#008a00" stroke-width="1.2" /><line x1="226" y1="232.5" x2="485" y2="232.5" stroke="#d80000" stroke-width="1" /><rect x="353.5" y="230" width="5" height="4.5" fill="none" stroke="#c8c8c8" stroke-width="1" /><line x1="64.5" y1="249" x2="64.5" y2="279" stroke="#dcdcdc" stroke-width="1" /><line x1="66" y1="281" x2="91" y2="281" stroke="#dcdcdc" stroke-width="1" /><rect x="62.5" y="279" width="4" height="4" fill="none" stroke="#dcdcdc" stroke-width="1" /><path d="M62.5 256 L64.5 252.5 L66.5 256" fill="none" stroke="#dcdcdc" stroke-width="0.8" /><path d="M88 279 L91.5 281 L88 283" fill="none" stroke="#dcdcdc" stroke-width="0.8" /><text x="61.5" y="251.5" font-family="Liberation Sans" font-size="5.5" fill="#ddd">Y</text><text x="93.5" y="284" font-family="Liberation Sans" font-size="6" fill="#ddd">X</text><path d="M441.5 90 L438.5 93.8 H445.5 M444.7 90 V98 M449 90 V96.5 Q449 98 450.5 98 H455.5 Q457 98 457 96.5 V90 M460.6 90 V96.5 Q460.6 98 462 98 H468 Q469.2 98 469.2 96.5 V93.5 M479 91 H487.5 M479 94.5 H487.5" stroke="#b8b8b8" stroke-width="1" fill="none"/><path d="M445.5 283.5 H438.6 V287.6 H444 Q445.2 287.6 445.2 289 V294.2 Q445.2 295.6 444 295.6 H439.5 L438.6 294 M450.5 283.5 H455.5 Q457 283.5 457 285 V294 Q457 295.6 455.5 295.6 H450.5 Q449 295.6 449 294 V285 Q449 283.5 450.5 283.5 M469.2 283.5 H462 Q460.6 283.5 460.6 285 V294 Q460.6 295.6 462 295.6 H469.2 V290 M478.8 287.8 H487.3 M478.8 291.8 H487.3" stroke="#b8b8b8" stroke-width="1" fill="none"/></svg>
<svg class="a" style="left:5.7px;top:102px;" width="14" height="14" viewBox="0 0 14 14"><path d="M3 3 L11 11" stroke="#333" stroke-width="1" fill="none"/><circle cx="3" cy="3" r="1.5" fill="#f0c020" stroke="#806000" stroke-width="0.5"/><circle cx="11" cy="11" r="1.5" fill="#f0c020" stroke="#806000" stroke-width="0.5"/></svg>
<svg class="a" style="left:5.7px;top:123px;" width="14" height="14" viewBox="0 0 14 14"><path d="M2 2 L12 12" stroke="#333" stroke-width="1" fill="none"/><path d="M2 2 L5 2.5 L2.5 5Z M12 12 L9 11.5 L11.5 9Z" fill="#333"/><circle cx="7" cy="7" r="1.5" fill="#f0c020" stroke="#806000" stroke-width="0.5"/></svg>
<svg class="a" style="left:5.7px;top:144px;" width="14" height="14" viewBox="0 0 14 14"><path d="M4 2 H10 L13 7 L10 12 H4 L1 7Z" stroke="#333" stroke-width="1" fill="none"/></svg>
<svg class="a" style="left:5.7px;top:165px;" width="14" height="14" viewBox="0 0 14 14"><path d="M2 3 L11 5 L12 11 L3 10Z" stroke="#333" stroke-width="1" fill="none"/><circle cx="2" cy="3" r="1.5" fill="#f0c020" stroke="#806000" stroke-width="0.5"/><circle cx="12" cy="11" r="1.5" fill="#f0c020" stroke="#806000" stroke-width="0.5"/></svg>
<svg class="a" style="left:5.7px;top:186px;" width="14" height="14" viewBox="0 0 14 14"><path d="M3 11 C3 4 11 4 11 10" stroke="#333" stroke-width="1" fill="none"/><circle cx="3" cy="11" r="1.5" fill="#f0c020" stroke="#806000" stroke-width="0.5"/><circle cx="11" cy="10" r="1.5" fill="#f0c020" stroke="#806000" stroke-width="0.5"/><circle cx="7" cy="5" r="1.5" fill="#f0c020" stroke="#806000" stroke-width="0.5"/></svg>
<svg class="a" style="left:5.7px;top:208px;" width="14" height="14" viewBox="0 0 14 14"><path d="M2 3 C6 3 10 6 11 11" stroke="#333" stroke-width="1" fill="none"/><circle cx="2" cy="3" r="1.5" fill="#f0c020" stroke="#806000" stroke-width="0.5"/><circle cx="7" cy="5" r="1.5" fill="#f0c020" stroke="#806000" stroke-width="0.5"/><circle cx="11" cy="11" r="1.5" fill="#f0c020" stroke="#806000" stroke-width="0.5"/></svg>
<svg class="a" style="left:5.7px;top:229px;" width="14" height="14" viewBox="0 0 14 14"><circle cx="7" cy="7" r="5.5" stroke="#333" stroke-width="1" fill="none"/><circle cx="7" cy="6" r="1.5" fill="#f0c020" stroke="#806000" stroke-width="0.5"/><circle cx="10" cy="10" r="1.5" fill="#f0c020" stroke="#806000" stroke-width="0.5"/></svg>
<svg class="a" style="left:5.7px;top:250px;" width="14" height="14" viewBox="0 0 14 14"><ellipse cx="7" cy="7" rx="6" ry="3.8" transform="rotate(-35 7 7)" stroke="#333" stroke-width="1" fill="none"/><path d="M5 7 H9 M7 5 V9" stroke="#333"/><circle cx="2" cy="10" r="1.5" fill="#f0c020" stroke="#806000" stroke-width="0.5"/><circle cx="12" cy="3" r="1.5" fill="#f0c020" stroke="#806000" stroke-width="0.5"/></svg>
<svg class="a" style="left:5.7px;top:271px;" width="14" height="14" viewBox="0 0 14 14"><path d="M3 11 C2 5 10 3 11 7 C12 10 8 11 6 11" stroke="#333" stroke-width="1" fill="none"/><path d="M5 7 H9 M7 5 V9" stroke="#333"/><circle cx="3" cy="11" r="1.5" fill="#f0c020" stroke="#806000" stroke-width="0.5"/><circle cx="8" cy="11" r="1.5" fill="#f0c020" stroke="#806000" stroke-width="0.5"/></svg>
<svg class="a" style="left:5.7px;top:292px;" width="14" height="14" viewBox="0 0 14 14"><circle cx="3" cy="3" r="1.5" fill="#f0c020" stroke="#806000" stroke-width="0.5"/><circle cx="8" cy="2" r="1.5" fill="#f0c020" stroke="#806000" stroke-width="0.5"/><circle cx="6" cy="7" r="1.5" fill="#f0c020" stroke="#806000" stroke-width="0.5"/><circle cx="11" cy="7" r="1.5" fill="#f0c020" stroke="#806000" stroke-width="0.5"/><circle cx="3" cy="11" r="1.5" fill="#f0c020" stroke="#806000" stroke-width="0.5"/><circle cx="9" cy="12" r="1.5" fill="#f0c020" stroke="#806000" stroke-width="0.5"/></svg>
<svg class="a" style="left:5.7px;top:313px;" width="14" height="14" viewBox="0 0 14 14"><path d="M1 11 C3 3 6 3 7 7 C8 11 11 10 12 3" stroke="#333" stroke-width="1" fill="none"/><circle cx="2" cy="11" r="1.5" fill="#f0c020" stroke="#806000" stroke-width="0.5"/><circle cx="12" cy="3" r="1.5" fill="#f0c020" stroke="#806000" stroke-width="0.5"/></svg>
<svg class="a" style="left:5.7px;top:334px;" width="14" height="14" viewBox="0 0 14 14"><rect x="1.5" y="2" width="12" height="10.5" fill="#cfcfcf"/><rect x="1.5" y="2.0" width="1.5" height="1.5" fill="#8c8c8c"/><rect x="1.5" y="5.0" width="1.5" height="1.5" fill="#8c8c8c"/><rect x="1.5" y="8.0" width="1.5" height="1.5" fill="#8c8c8c"/><rect x="1.5" y="11.0" width="1.5" height="1.5" fill="#8c8c8c"/><rect x="3.0" y="3.5" width="1.5" height="1.5" fill="#8c8c8c"/><rect x="3.0" y="6.5" width="1.5" height="1.5" fill="#8c8c8c"/><rect x="3.0" y="9.5" width="1.5" height="1.5" fill="#8c8c8c"/><rect x="4.5" y="2.0" width="1.5" height="1.5" fill="#8c8c8c"/><rect x="4.5" y="5.0" width="1.5" height="1.5" fill="#8c8c8c"/><rect x="4.5" y="8.0" width="1.5" height="1.5" fill="#8c8c8c"/><rect x="4.5" y="11.0" width="1.5" height="1.5" fill="#8c8c8c"/><rect x="6.0" y="3.5" width="1.5" height="1.5" fill="#8c8c8c"/><rect x="6.0" y="6.5" width="1.5" height="1.5" fill="#8c8c8c"/><rect x="6.0" y="9.5" width="1.5" height="1.5" fill="#8c8c8c"/><rect x="7.5" y="2.0" width="1.5" height="1.5" fill="#8c8c8c"/><rect x="7.5" y="5.0" width="1.5" height="1.5" fill="#8c8c8c"/><rect x="7.5" y="8.0" width="1.5" height="1.5" fill="#8c8c8c"/><rect x="7.5" y="11.0" width="1.5" height="1.5" fill="#8c8c8c"/><rect x="9.0" y="3.5" width="1.5" height="1.5" fill="#8c8c8c"/><rect x="9.0" y="6.5" width="1.5" height="1.5" fill="#8c8c8c"/><rect x="9.0" y="9.5" width="1.5" height="1.5" fill="#8c8c8c"/><rect x="10.5" y="2.0" width="1.5" height="1.5" fill="#8c8c8c"/><rect x="10.5" y="5.0" width="1.5" height="1.5" fill="#8c8c8c"/><rect x="10.5" y="8.0" width="1.5" height="1.5" fill="#8c8c8c"/><rect x="10.5" y="11.0" width="1.5" height="1.5" fill="#8c8c8c"/><rect x="12.0" y="3.5" width="1.5" height="1.5" fill="#8c8c8c"/><rect x="12.0" y="6.5" width="1.5" height="1.5" fill="#8c8c8c"/><rect x="12.0" y="9.5" width="1.5" height="1.5" fill="#8c8c8c"/></svg>
<svg class="a" style="left:5.7px;top:355px;" width="14" height="14" viewBox="0 0 14 14"><rect x="1" y="3" width="8" height="9" fill="#fff" opacity="0.9"/><text x="1.5" y="9.5" font-family="Liberation Sans" font-size="8" fill="#222">A</text><circle cx="7.5" cy="2.5" r="1.5" fill="none" stroke="#444" stroke-width="0.5"/><circle cx="10" cy="10" r="3.2" fill="#20a830"/><path d="M10 8 V12 M8 10 H12" stroke="#fff" stroke-width="1.1"/></svg>
<svg class="a" style="left:5.7px;top:376px;" width="14" height="14" viewBox="0 0 14 14"><path d="M4.8 4 L7 6.2 L9.2 4 M4.8 7.5 L7 9.7 L9.2 7.5" stroke="#222" stroke-width="1.3" fill="none"/></svg>
<svg class="a" style="left:7px;top:93.5px;" width="14" height="5" viewBox="0 0 14 5"><rect x="0.0" y="0.0" width="1" height="1" fill="#c2beba"/><rect x="0.0" y="2.2" width="1" height="1" fill="#c2beba"/><rect x="2.2" y="0.0" width="1" height="1" fill="#c2beba"/><rect x="2.2" y="2.2" width="1" height="1" fill="#c2beba"/><rect x="4.4" y="0.0" width="1" height="1" fill="#c2beba"/><rect x="4.4" y="2.2" width="1" height="1" fill="#c2beba"/><rect x="6.6000000000000005" y="0.0" width="1" height="1" fill="#c2beba"/><rect x="6.6000000000000005" y="2.2" width="1" height="1" fill="#c2beba"/><rect x="8.8" y="0.0" width="1" height="1" fill="#c2beba"/><rect x="8.8" y="2.2" width="1" height="1" fill="#c2beba"/><rect x="11.0" y="0.0" width="1" height="1" fill="#c2beba"/><rect x="11.0" y="2.2" width="1" height="1" fill="#c2beba"/></svg>
<svg class="a" style="left:498px;top:93.5px;" width="14" height="5" viewBox="0 0 14 5"><rect x="0.0" y="0.0" width="1" height="1" fill="#c2beba"/><rect x="0.0" y="2.2" width="1" height="1" fill="#c2beba"/><rect x="2.2" y="0.0" width="1" height="1" fill="#c2beba"/><rect x="2.2" y="2.2" width="1" height="1" fill="#c2beba"/><rect x="4.4" y="0.0" width="1" height="1" fill="#c2beba"/><rect x="4.4" y="2.2" width="1" height="1" fill="#c2beba"/><rect x="6.6000000000000005" y="0.0" width="1" height="1" fill="#c2beba"/><rect x="6.6000000000000005" y="2.2" width="1" height="1" fill="#c2beba"/><rect x="8.8" y="0.0" width="1" height="1" fill="#c2beba"/><rect x="8.8" y="2.2" width="1" height="1" fill="#c2beba"/><rect x="11.0" y="0.0" width="1" height="1" fill="#c2beba"/><rect x="11.0" y="2.2" width="1" height="1" fill="#c2beba"/></svg>
<svg class="a" style="left:497px;top:103px;" width="14" height="14" viewBox="0 0 14 14"><path d="M3 10 L9 2 L12.5 4.5 L6.5 12Z" fill="#f0a0a0" stroke="#c07070" stroke-width="0.6"/><path d="M2 13 H13" stroke="#555" stroke-width="1.2"/></svg>
<svg class="a" style="left:497px;top:124px;" width="14" height="14" viewBox="0 0 14 14"><rect x="1.5" y="8" width="4" height="4" fill="#fff" stroke="#333"/><rect x="8.5" y="1.5" width="4" height="4" fill="#fff" stroke="#333"/><path d="M5 8.5 L9 5" stroke="#2a7ae8" stroke-width="1.3"/></svg>
<svg class="a" style="left:497px;top:145px;" width="14" height="14" viewBox="0 0 14 14"><path d="M6.5 1 V13 H1.5Z" fill="none" stroke="#333" stroke-width="0.8" stroke-dasharray="1.5 1"/><path d="M7.5 1 V13 H12.5Z" fill="#fff" stroke="#333" stroke-width="0.9"/></svg>
<svg class="a" style="left:497px;top:166px;" width="14" height="14" viewBox="0 0 14 14"><rect x="1.5" y="8" width="4" height="4" fill="none" stroke="#666" stroke-dasharray="1 1"/><rect x="8.5" y="1.5" width="4" height="4" fill="#fff" stroke="#333"/><path d="M5 8.5 L9 5" stroke="#2a7ae8" stroke-width="1.3"/></svg>
<svg class="a" style="left:497px;top:187px;" width="14" height="14" viewBox="0 0 14 14"><path d="M1.5 2.5 H12.5 V6 L8 12.5" fill="none" stroke="#333" stroke-width="1.2"/><path d="M3 5 H10 L6 11" fill="none" stroke="#888" stroke-width="0.7" stroke-dasharray="1 1"/></svg>
<svg class="a" style="left:497px;top:208px;" width="14" height="14" viewBox="0 0 14 14"><circle cx="2.5" cy="2.5" r="1.6" fill="#fff" stroke="#444" stroke-width="0.9"/><circle cx="2.5" cy="7.0" r="1.6" fill="#fff" stroke="#444" stroke-width="0.9"/><circle cx="2.5" cy="11.5" r="1.6" fill="#fff" stroke="#444" stroke-width="0.9"/><circle cx="7.0" cy="2.5" r="1.6" fill="#fff" stroke="#444" stroke-width="0.9"/><circle cx="7.0" cy="7.0" r="1.6" fill="#fff" stroke="#444" stroke-width="0.9"/><circle cx="7.0" cy="11.5" r="1.6" fill="#fff" stroke="#444" stroke-width="0.9"/><circle cx="11.5" cy="2.5" r="1.6" fill="#fff" stroke="#444" stroke-width="0.9"/><circle cx="11.5" cy="7.0" r="1.6" fill="#fff" stroke="#444" stroke-width="0.9"/><circle cx="11.5" cy="11.5" r="1.6" fill="#fff" stroke="#444" stroke-width="0.9"/></svg>
<svg class="a" style="left:497px;top:230px;" width="14" height="14" viewBox="0 0 14 14"><rect x="1.5" y="4.5" width="7" height="6" fill="none" stroke="#666" stroke-dasharray="1 1"/><path d="M6 6 L9 4 L12.5 7.5 L9.5 10.5Z" fill="#fff" stroke="#333"/><path d="M5 3 A3 3 0 0 1 9 2" stroke="#2a7ae8" fill="none" stroke-width="1.1"/></svg>
<svg class="a" style="left:497px;top:251px;" width="14" height="14" viewBox="0 0 14 14"><rect x="1.5" y="1.5" width="11" height="11" fill="none" stroke="#333"/><path d="M1.5 7 H7 V12.5" fill="none" stroke="#777" stroke-dasharray="1 1"/><path d="M6 8 L11 3" stroke="#2a7ae8" stroke-width="1.2"/></svg>
<svg class="a" style="left:497px;top:271px;" width="14" height="14" viewBox="0 0 14 14"><path d="M2 1.5 H6 V8 H12.5 V12.5 H2Z" fill="#ddd" stroke="#333"/><path d="M8 10 H11" stroke="#2a7ae8" stroke-width="1.3"/></svg>
<svg class="a" style="left:497px;top:292px;" width="14" height="14" viewBox="0 0 14 14"><path d="M1 2.5 H6 L9 6" stroke="#222" stroke-width="1.6" fill="none"/><path d="M9 6 L12 12" stroke="#2a7ae8" stroke-width="1.8" fill="none"/></svg>
<svg class="a" style="left:497px;top:313px;" width="14" height="14" viewBox="0 0 14 14"><path d="M1 2.5 H6 A6 6 0 0 1 12 8.5 V12" stroke="#2a7ae8" stroke-width="1.5" fill="none"/><path d="M1 2.5 H4" stroke="#222" stroke-width="1.6"/><path d="M11 10 V13" stroke="#222" stroke-width="1.8"/><path d="M7 7 V11 M5 9 H9" stroke="#222" stroke-width="0.9"/></svg>
<svg class="a" style="left:497px;top:334px;" width="14" height="14" viewBox="0 0 14 14"><path d="M11 2 H5.5 A4.5 4.5 0 0 0 1.5 6.5 V8 A4.5 4.5 0 0 0 5.5 12.5 H11" stroke="#333" stroke-width="1" fill="none"/><path d="M11 2 V12.5" stroke="#888" stroke-width="0.6"/><circle cx="11.2" cy="6" r="1.4" fill="#2a7ae8"/></svg>
<svg class="a" style="left:497px;top:355px;" width="14" height="14" viewBox="0 0 14 14"><path d="M11 2 H5.5 A4.5 4.5 0 0 0 1.5 6.5 V8 A4.5 4.5 0 0 0 5.5 12.5 H11" stroke="#333" stroke-width="1" fill="none"/><circle cx="11.2" cy="5" r="1.3" fill="#2a7ae8"/><circle cx="11.2" cy="9" r="1.3" fill="#2a7ae8"/></svg>
<svg class="a" style="left:497px;top:376px;" width="14" height="14" viewBox="0 0 14 14"><path d="M4.8 4 L7 6.2 L9.2 4 M4.8 7.5 L7 9.7 L9.2 7.5" stroke="#222" stroke-width="1.3" fill="none"/></svg>
<svg class="a" style="left:27px;top:317px;" width="100" height="14" viewBox="0 0 100 14"><path d="M0.5 0 L3.5 11.5 Q4.5 13 6 13 H37 Q38.5 13 39 11.5 L42 0" fill="#fff" stroke="#555" stroke-width="0.9"/><path d="M42 0 L45 11.5 Q45.5 13 47 13 H87 Q88.5 13 89 11.5 L92 0" fill="#dcd9d6" stroke="#555" stroke-width="0.9"/></svg>
<div class="t" style="left:34.5px;top:319.9px;font-size:9.3px;line-height:9.3px;color:#222;">Model</div>
<div class="t" style="left:79.3px;top:318.8px;font-size:9.0px;line-height:9.0px;color:#222;">Layout1</div>
<div class="a" style="left:127px;top:406px;width:103px;height:10px;border:1px solid #c6c2be;border-bottom:none"></div>
<div class="a" style="left:236px;top:406px;width:122px;height:10px;border:1px solid #c6c2be;border-bottom:none"></div>
<div class="a" style="left:127.5px;top:396.7px;width:31.2px;height:14.5px;background:linear-gradient(#f6f5f4,#e6e4e2);border:1px solid #b0aca8;border-radius:2px"></div>
<div class="t" style="left:127.5px;top:399px;width:31.2px;text-align:center;font-size:9.4px;line-height:9.4px;color:#222">Snap</div>
<div class="a" style="left:164.5px;top:396.7px;width:27.0px;height:14.5px;background:linear-gradient(#f6f5f4,#e6e4e2);border:1px solid #b0aca8;border-radius:2px"></div>
<div class="t" style="left:164.5px;top:399px;width:27.0px;text-align:center;font-size:9.4px;line-height:9.4px;color:#222">Grid</div>
<div class="a" style="left:196.6px;top:396.7px;width:32.8px;height:14.5px;background:linear-gradient(#d2ceca,#c8c4c0);border:1px solid #b0aca8;border-radius:2px"></div>
<div class="t" style="left:196.6px;top:399px;width:32.8px;text-align:center;font-size:9.4px;line-height:9.4px;color:#222">Ortho</div>
<div class="a" style="left:237.2px;top:396.7px;width:32.1px;height:14.5px;background:linear-gradient(#f6f5f4,#e6e4e2);border:1px solid #b0aca8;border-radius:2px"></div>
<div class="t" style="left:237.2px;top:399px;width:32.1px;text-align:center;font-size:9.4px;line-height:9.4px;color:#222">Polar</div>
<div class="a" style="left:274.3px;top:396.7px;width:38.3px;height:14.5px;background:linear-gradient(#d2ceca,#c8c4c0);border:1px solid #b0aca8;border-radius:2px"></div>
<div class="t" style="left:274.3px;top:399px;width:38.3px;text-align:center;font-size:9.4px;line-height:9.4px;color:#222">ESnap</div>
<div class="a" style="left:317.3px;top:396.7px;width:38.5px;height:14.5px;background:linear-gradient(#f6f5f4,#e6e4e2);border:1px solid #b0aca8;border-radius:2px"></div>
<div class="t" style="left:317.3px;top:399px;width:38.5px;text-align:center;font-size:9.4px;line-height:9.4px;color:#222">ETrack</div>
<svg class="a" style="left:508px;top:406px" width="10" height="9"><rect x="2.0" y="6.0" width="1.2" height="1.2" fill="#f2f0ee"/><rect x="4.5" y="3.5" width="1.2" height="1.2" fill="#f2f0ee"/><rect x="4.5" y="6.0" width="1.2" height="1.2" fill="#f2f0ee"/><rect x="7.0" y="1.0" width="1.2" height="1.2" fill="#f2f0ee"/><rect x="7.0" y="3.5" width="1.2" height="1.2" fill="#f2f0ee"/><rect x="7.0" y="6.0" width="1.2" height="1.2" fill="#f2f0ee"/></svg>
<div class="t" style="left:362.3px;top:399.5px;font-size:9.37px;line-height:9.37px;color:#222;">(108305,88263,0)</div>

</body></html>
